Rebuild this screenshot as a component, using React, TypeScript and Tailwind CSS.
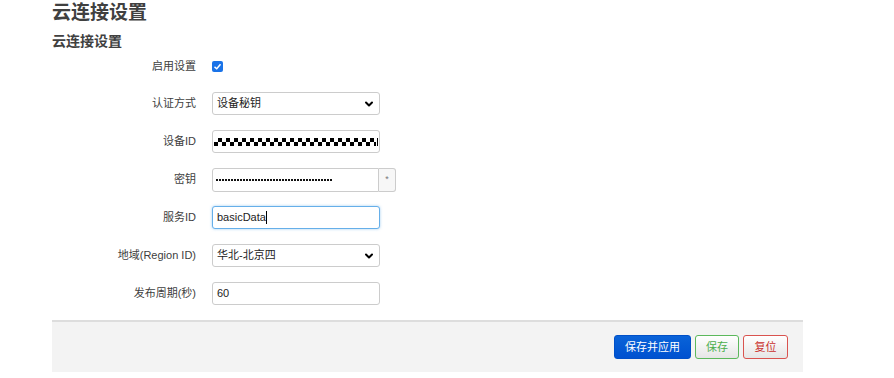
import { ChevronDown } from 'lucide-react'

const font = { fontFamily: '"Liberation Sans", "Noto Sans CJK SC", sans-serif' }

function Row({ label, children }: { label: string; children: React.ReactNode }) {
  return (
    <div className="flex items-center h-[23px] mb-[15px]">
      <div className="w-[144px] text-right text-[11px] text-[#404040]">{label}</div>
      <div className="ml-[16px] flex items-center">{children}</div>
    </div>
  )
}

function Select({ value }: { value: string }) {
  return (
    <div className="w-[168px] h-[23px] border border-[#ccc] rounded-[3px] bg-white flex items-center justify-between pl-[4px] pr-[4px] text-[11px] text-[#222]">
      <span>{value}</span>
      <ChevronDown className="w-[12px] h-[12px] text-black" strokeWidth={4} />
    </div>
  )
}

export default function App() {
  return (
    <div className="w-[894px] h-[378px] bg-white overflow-hidden" style={font}>
      <div className="ml-[52px] w-[751px]">
        <h1 className="text-[19px] font-bold text-[#404040] leading-[24px] pt-[1px]">云连接设置</h1>
        <h2 className="text-[14px] font-bold text-[#404040] leading-[20px] mt-[6px]">云连接设置</h2>

        <div className="mt-[5px]">
          <div className="flex items-center h-[21px] mb-[15px]">
            <div className="w-[144px] text-right text-[11px] text-[#404040]">启用设置</div>
            <div className="ml-[16px] w-[11px] h-[11px] rounded-[2px] bg-[#1a73e8] flex items-center justify-center">
              <svg viewBox="0 0 12 12" className="w-[9px] h-[9px]">
                <path d="M2 6.5 L5 9 L10 3" stroke="white" strokeWidth="2" fill="none" />
              </svg>
            </div>
          </div>

          <Row label="认证方式">
            <Select value="设备秘钥" />
          </Row>

          <Row label="设备ID">
            <div className="w-[168px] h-[23px] border border-[#ccc] rounded-[3px] bg-white flex items-center pl-[1px]">
              <div className="w-[162px] h-[8px] bg-[conic-gradient(#000_25%,#fff_0_50%,#000_0_75%,#fff_0)] bg-[length:8px_8px]" />
              <div className="w-[1px] h-[8px] bg-black ml-[1px]" />
            </div>
          </Row>

          <Row label="密钥">
            <div className="flex">
              <div className="w-[167px] h-[24px] border border-[#ccc] rounded-l-[3px] bg-white flex items-center pl-[3px]">
                <div className="w-[117px] h-[2px] bg-[repeating-linear-gradient(90deg,#111_0_2px,transparent_2px_3px)]" />
              </div>
              <div className="w-[17px] h-[24px] border border-l-0 border-[#ccc] rounded-r-[3px] bg-[#f7f7f7] flex items-center justify-center text-[9px] text-[#777]">*</div>
            </div>
          </Row>

          <Row label="服务ID">
            <div className="w-[168px] h-[23px] border border-[#66afe9] rounded-[3px] bg-white flex items-center pl-[4px] text-[11px] text-[#222] shadow-[0_0_3px_rgba(102,175,233,0.6)]">
              <span>basicData</span>
              <span className="w-[1px] h-[13px] bg-black" />
            </div>
          </Row>

          <Row label="地域(Region ID)">
            <Select value="华北-北京四" />
          </Row>

          <Row label="发布周期(秒)">
            <div className="w-[168px] h-[23px] border border-[#ccc] rounded-[3px] bg-white flex items-center pl-[4px] text-[11px] text-[#222]">
              60
            </div>
          </Row>
        </div>

        <div className="mt-[2px] h-[52px] bg-[#f3f3f3] border-t-2 border-[#ddd] flex items-center justify-end gap-[4px] pr-[15px]">
          <button className="w-[77px] h-[24px] rounded-[3px] bg-gradient-to-b from-[#0a63d8] to-[#0051d0] border border-[#0050c8] text-white text-[11px]">保存并应用</button>
          <button className="w-[44px] h-[24px] rounded-[3px] bg-gradient-to-b from-white to-[#e6e6e6] border border-[#5cb85c] text-[#4cae4c] text-[11px]">保存</button>
          <button className="w-[45px] h-[24px] rounded-[3px] bg-gradient-to-b from-white to-[#e6e6e6] border border-[#d9534f] text-[#c9302c] text-[11px]">复位</button>
        </div>
      </div>
    </div>
  )
}
